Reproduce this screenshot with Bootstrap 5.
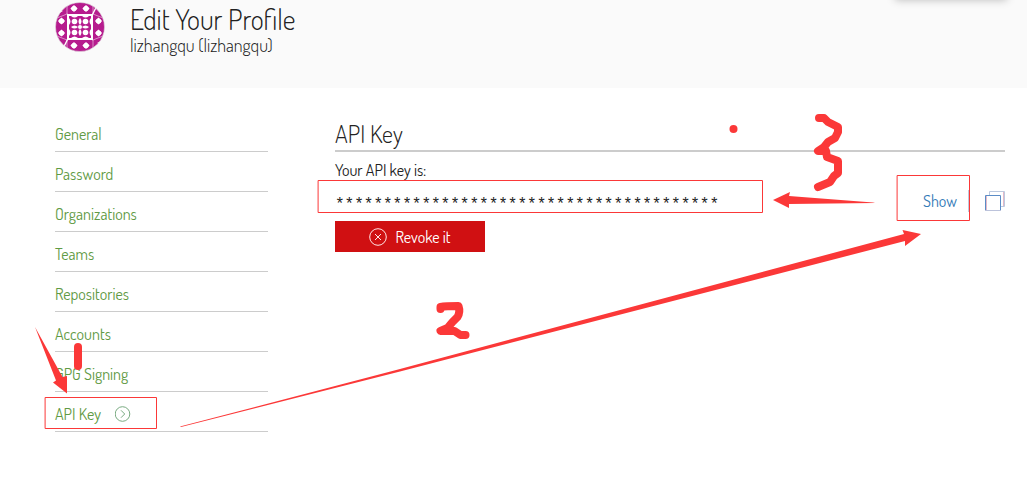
<!DOCTYPE html>
<html lang="en">
<head>
<meta charset="utf-8">
<meta name="viewport" content="width=device-width, initial-scale=1">
<title>Edit Your Profile</title>
<link href="https://cdn.jsdelivr.net/npm/bootstrap@5.3.0/dist/css/bootstrap.min.css" rel="stylesheet">
<style>
  body { font-family: Dosis, "Liberation Sans Narrow", Roboto, sans-serif; font-weight: 400; font-size: 16px; line-height: 20px; color: #222; background: #fff; }
  .edge { padding-left: 55px; padding-right: 22px; }
  .profile-head { height: 88px; background: #fafafa; gap: 25px; }
  .avatar { width: 50px; height: 50px; margin-top: 2px; }
  .page-title { font-size: 28px; line-height: 32px; font-weight: 300; margin: 3px 0 0; }
  .page-user { font-size: 18px; line-height: 20px; font-weight: 300; }
  .top-shadow { top: -10px; right: 20px; width: 112px; height: 10px; box-shadow: 0 0 8px rgba(0,0,0,.25); }
  .columns { padding-top: 24px; gap: 67px; }
  .side { width: 213px; }
  .side a { height: 40px; padding-top: 5px; gap: 14px; color: #5f9a44; text-decoration: none; border-bottom: 1px solid #ccc; }
  .section-title { font-size: 24px; line-height: 40px; font-weight: 300; border-bottom: 2px solid #ccc; margin: 0 0 8px; padding-top: 2px; height: 40px; }
  .key-field { height: 24px; font-family: "Liberation Mono", monospace; font-size: 16px; color: #222; background: none; min-width: 0; }
  .key-row { height: 41px; }
  .key-row .key-field { padding: 8px 0 0; }
  .show-btn { color: #337ab7; font-size: 16px; line-height: 22px; padding: 0 11px; border-right: 1px solid #c3c9dc; height: 22px; }
  .revoke { width: 150px; height: 31px; background: #d01012; color: #fff; font-size: 16px; }
  .marks { top: 0; left: 0; pointer-events: none; }
</style>
</head>
<body class="position-relative">
<header class="profile-head edge d-flex position-relative overflow-hidden">
  <svg class="avatar flex-shrink-0" viewBox="0 0 50 50" role="img" aria-label="Avatar">
    <defs>
      <clipPath id="round"><circle cx="25" cy="25" r="24.5"/></clipPath>
      <g id="dot" fill="#fff"><path d="M0-3.600 3.600 0 0 3.600-3.600 0z"/><circle r="2.600"/></g>
      <g id="petals"><path fill="#b61c8e" d="M-5.500-5.500h11v11h-11z"/><path fill="#fff" d="M-3.500-5.500Q0-2.500 3.500-5.500zM-3.500 5.500Q0 2.500 3.500 5.500zM-5.500-3.500Q-2.500 0-5.500 3.500zM5.500-3.500Q2.500 0 5.500 3.500z"/><circle r="2.800" fill="#fff"/></g>
    </defs>
    <g clip-path="url(#round)">
      <path fill="#fff" d="M0 0h50v50H0z"/>
      <path fill="#b61c8e" d="M0 13h12v24H0zM38 13h12v24H38zM13 0h24v12H13zM13 38h24v12H13z"/>
      <path fill="#b61c8e" d="M0 13 12 7v6zM43 0 37 12V0zM50 37 38 43v-6zM7 50l6-12v12zM0 37h12l-6 12zM38 13h12L44 1zM13 0v12L1 6zM37 50V38l12 6z"/>
      <path d="M12 0v12L2 16M38 0v12l10 4M12 50V38L2 34M38 50V38l10-4" stroke="#fff" stroke-width=".5" fill="none"/>
      <use href="#dot" x="19" y="6.500"/><use href="#dot" x="31" y="6.500"/>
      <use href="#dot" x="19" y="43.500"/><use href="#dot" x="31" y="43.500"/>
      <use href="#dot" x="6.500" y="19"/><use href="#dot" x="6.500" y="31"/>
      <use href="#dot" x="43.500" y="19"/><use href="#dot" x="43.500" y="31"/>
      <use href="#petals" x="19.500" y="19.500"/><use href="#petals" x="30.500" y="19.500"/>
      <use href="#petals" x="19.500" y="30.500"/><use href="#petals" x="30.500" y="30.500"/>
      <circle cx="25" cy="25" r="2" fill="#fff"/>
      <path d="M13 13h24v24H13z" stroke="#fff" fill="none"/>
    </g>
    <circle cx="25" cy="25" r="24.500" fill="none" stroke="#ddd" stroke-width=".6"/>
  </svg>
  <div>
    <h1 class="page-title">Edit Your Profile</h1>
    <div class="page-user">lizhangqu (lizhangqu)</div>
  </div>
  <div class="top-shadow position-absolute"></div>
</header>
<div class="columns edge d-flex">
  <nav class="side flex-shrink-0" aria-label="Profile settings">
    <a class="d-flex align-items-center" href="#general">General</a>
    <a class="d-flex align-items-center" href="#password">Password</a>
    <a class="d-flex align-items-center" href="#organizations">Organizations</a>
    <a class="d-flex align-items-center" href="#teams">Teams</a>
    <a class="d-flex align-items-center" href="#repositories">Repositories</a>
    <a class="d-flex align-items-center" href="#accounts">Accounts</a>
    <a class="d-flex align-items-center" href="#gpg">GPG Signing</a>
    <a class="d-flex align-items-center" href="#apikey" aria-current="page">API Key
      <svg width="16" height="16" viewBox="0 0 16 16" fill="none" stroke="#78aa80"><circle cx="7.500" cy="8" r="7.300"/><path d="M6 4.300 9.700 8 6 11.700"/></svg>
    </a>
  </nav>
  <main class="flex-grow-1">
    <h2 class="section-title">API Key</h2>
    <label for="key" class="d-block">Your API key is:</label>
    <div class="key-row d-flex align-items-center">
      <input id="key" class="key-field border-0 flex-grow-1" type="text" readonly value="****************************************">
      <button class="show-btn btn border-top-0 border-start-0 border-bottom-0 rounded-0" type="button">Show</button>
      <button class="btn p-0 border-0 ms-3 d-flex" type="button" aria-label="Copy key">
        <svg width="20" height="20" viewBox="0 0 20 20" fill="none"><path stroke="#bcc9df" d="M4.500 4V.5h15v15H16"/><path stroke="#e3b9c8" d="M18.500 1v14M1.500 5v14"/><path stroke="#5b8cc6" d="M.5 19V4.500h15V19"/><path stroke="#bcc3db" d="M0 19.500h16"/></svg>
      </button>
    </div>
    <button class="revoke btn border-0 rounded-0 p-0 d-flex align-items-center justify-content-center gap-2" type="button">
      <svg width="18" height="18" viewBox="0 0 18 18" fill="none" stroke="#ffe5e5"><circle cx="9" cy="9" r="8.300"/><path d="m6 6 6 6m0-6-6 6"/></svg>
      Revoke it
    </button>
  </main>
</div>
<!-- Hand-drawn tutorial marks laid over the page -->
<svg class="marks position-absolute" width="1027" height="479" viewBox="0 0 1027 479" fill="none" stroke-linecap="round" stroke-linejoin="round" aria-hidden="true">
  <g stroke="#fb3838" stroke-linejoin="miter"><path d="M318.500 180.500h444v32h-444zM897.500 175.500h72v45h-72zM45.500 397.500h111v31h-111z"/></g>
  <g fill="#fb3838">
    <path d="M35 327 62.500 377 67 376V393.500L53 382.500l3-2z"/>
    <path d="M773 200 790 192 789 196 873 202.500 875 203 789 204 789 208z"/>
    <path d="M180 426.500 400 369 904 234 902.500 230 921 234 905 246 905 241 400 371.500 181 427z"/>
    <circle cx="733.500" cy="129" r="4"/>
  </g>
  <g stroke="#fb3838" stroke-width="8">
    <path d="M78 347v19"/>
    <path d="M440.500 309v-2q5-1 18-1 2 6-1 11l-5 5-5 6-7 3h14l6 4h5"/>
    <path d="M819 118h5l4 4 10 5v5l-3 6-7 4-4 5-6 4h8l1 6 11 4v12l-4 3-4 6-12 5"/>
  </g>
</svg>
<script src="https://cdn.jsdelivr.net/npm/bootstrap@5.3.0/dist/js/bootstrap.bundle.min.js"></script>
</body>
</html>
